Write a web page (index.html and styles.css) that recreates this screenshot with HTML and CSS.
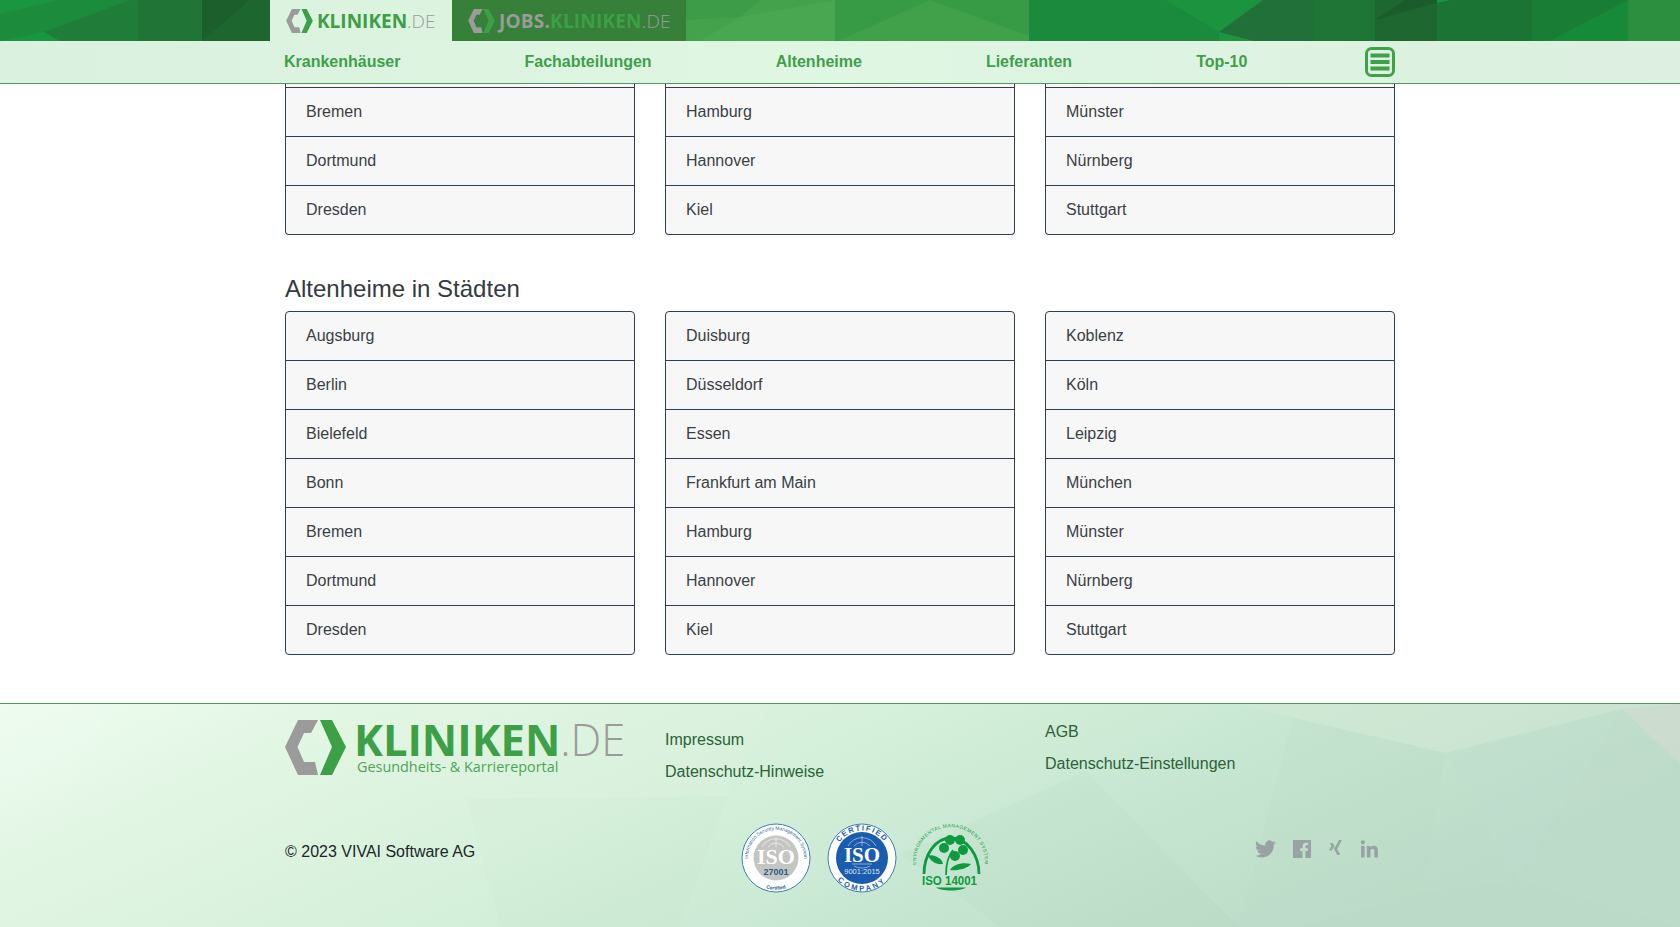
FILE: index.html
```html
<!DOCTYPE html>
<html lang="de">
<head>
	<meta charset="UTF-8">
	<title>Altenheime in Städten - Kliniken.de</title>
	<link rel="stylesheet" href="styles.css">
</head>
<body>
	<svg class="defs" width="0" height="0">
		<symbol id="logo-mark" viewBox="0 0 61 55">
			<polygon fill="#9b9b9b" points="13,0 33,0 26,13 19,13 12.500,27 19,42 30,42 33,55 13,55 0,27"/>
			<polygon fill="#3d9f46" points="35,0 47,0 61,27 47,55 35,55 47,27"/>
		</symbol>
	</svg>

	<header class="site-header">
		<div class="header-band">
			<svg class="poly-bg" viewBox="0 0 1680 41" preserveAspectRatio="none">
				<rect width="1680" height="41" fill="#1a9540"/>
				<polygon fill="#1c8b3c" points="0,41 44,32 130,0 60,0 0,14"/>
				<polygon fill="#1f7d39" points="44,32 130,0 140,0 140,41 60,41"/>
				<polygon fill="#207536" points="138,0 202,0 202,41 138,41"/>
				<polygon fill="#1e6630" points="202,0 270,0 270,41 202,41"/>
				<polygon fill="#1c5f2d" points="202,41 250,0 202,0"/>
				<polygon fill="#44a24c" points="686,0 840,0 840,41 686,41"/>
				<polygon fill="#3d9c47" points="686,0 760,0 740,17 686,20"/>
				<polygon fill="#49a651" points="740,17 835,0 835,41 700,41"/>
				<polygon fill="#379a44" points="835,0 1030,0 1030,41 835,41"/>
				<polygon fill="#41a14a" points="838,41 930,0 1043,41"/>
				<polygon fill="#1b8a3d" points="1029,0 1120,0 1120,41 1029,41"/>
				<polygon fill="#1a8a3d" points="1120,0 1219,0 1219,41 1120,41"/>
				<polygon fill="#1b933f" points="1165,0 1219,32 1263,0"/>
				<polygon fill="#21703a" points="1219,32 1263,0 1375,0 1375,41 1254,41"/>
				<polygon fill="#1f7535" points="1313,0 1375,0 1375,41 1313,41"/>
				<polygon fill="#1e6730" points="1375,0 1437,0 1437,41 1375,41"/>
				<polygon fill="#1b5c2c" points="1375,20 1405,0 1437,0 1437,3"/>
				<polygon fill="#1b7434" points="1437,3 1450,0 1532,0 1532,41 1437,41"/>
				<polygon fill="#1a7d36" points="1532,0 1628,0 1628,41 1532,41"/>
				<polygon fill="#178a3a" points="1550,41 1628,0 1628,41"/>
				<polygon fill="#2c8f3f" points="1628,0 1680,0 1680,41 1628,41"/>
			</svg>
			<div class="header-tabs">
				<a class="tab tab-active">
					<svg class="tab-mark"><use href="#logo-mark"/></svg>
					<span class="brand"><b>KLINIKEN</b><i>.DE</i></span>
				</a>
				<a class="tab tab-jobs">
					<svg class="tab-mark"><use href="#logo-mark"/></svg>
					<span class="brand brand-jobs"><b class="brand-gray">JOBS.</b><b>KLINIKEN</b><i>.DE</i></span>
				</a>
			</div>
		</div>
		<nav class="main-nav">
			<div class="main-nav-inner">
				<a>Krankenhäuser</a>
				<a>Fachabteilungen</a>
				<a>Altenheime</a>
				<a>Lieferanten</a>
				<a>Top-10</a>
				<svg class="menu-icon" viewBox="0 0 30 30">
					<rect x="1.500" y="1.500" width="27" height="27" rx="5" fill="none" stroke="#3fa24a" stroke-width="3"/>
					<rect x="5.500" y="6.500" width="19" height="4" fill="#3fa24a"/>
					<rect x="5.500" y="13" width="19" height="4" fill="#3fa24a"/>
					<rect x="5.500" y="19.500" width="19" height="4" fill="#3fa24a"/>
				</svg>
			</div>
		</nav>
	</header>

	<main class="content">
		<div class="city-grid">
			<ul class="city-list city-list-cut">
				<li></li>
				<li>Bremen</li>
				<li>Dortmund</li>
				<li>Dresden</li>
			</ul>
			<ul class="city-list city-list-cut">
				<li></li>
				<li>Hamburg</li>
				<li>Hannover</li>
				<li>Kiel</li>
			</ul>
			<ul class="city-list city-list-cut">
				<li></li>
				<li>Münster</li>
				<li>Nürnberg</li>
				<li>Stuttgart</li>
			</ul>
		</div>

		<h3 class="section-title">Altenheime in Städten</h3>
		<div class="city-grid">
			<ul class="city-list">
				<li>Augsburg</li>
				<li>Berlin</li>
				<li>Bielefeld</li>
				<li>Bonn</li>
				<li>Bremen</li>
				<li>Dortmund</li>
				<li>Dresden</li>
			</ul>
			<ul class="city-list">
				<li>Duisburg</li>
				<li>Düsseldorf</li>
				<li>Essen</li>
				<li>Frankfurt am Main</li>
				<li>Hamburg</li>
				<li>Hannover</li>
				<li>Kiel</li>
			</ul>
			<ul class="city-list">
				<li>Koblenz</li>
				<li>Köln</li>
				<li>Leipzig</li>
				<li>München</li>
				<li>Münster</li>
				<li>Nürnberg</li>
				<li>Stuttgart</li>
			</ul>
		</div>
	</main>

	<footer class="site-footer">
		<svg class="poly-bg" viewBox="0 0 1680 223" preserveAspectRatio="none">
			<defs>
				<linearGradient id="footer-fade" x1="0" y1="0" x2="1" y2=".3">
					<stop offset="0" stop-color="#edfcef"/>
					<stop offset=".25" stop-color="#e0f5e2"/>
					<stop offset=".5" stop-color="#d5f0da"/>
					<stop offset=".75" stop-color="#c6e6d1"/>
					<stop offset="1" stop-color="#bcdcc9"/>
				</linearGradient>
			</defs>
			<rect width="1680" height="223" fill="url(#footer-fade)"/>
			<polygon fill="#ffffff" opacity=".07" points="0,0 112,0 64,94 0,90"/>
			<polygon fill="#ffffff" opacity=".03" points="112,0 289,0 257,20 64,94"/>
			<polygon fill="#ffffff" opacity=".03" points="257,20 466,95 509,0 289,0"/>
			<polygon fill="#ffffff" opacity=".05" points="509,0 771,0 728,92 466,95"/>
			<polygon fill="#000000" opacity=".008" points="466,95 728,92 680,223 500,223"/>
			<polygon fill="#000000" opacity=".012" points="1086,67 1239,223 1000,223 900,150"/>
			<polygon fill="#d6e8d8" opacity=".45" points="1293,14 1445,49 1622,5 1680,0 1240,0"/>
			<polygon fill="#d2dcd2" opacity=".7" points="1622,5 1680,0 1680,60"/>
			<polygon fill="#bcdcc9" opacity=".25" points="1293,14 1445,49 1424,189 1239,223"/>
			<polygon fill="#c4dccd" opacity=".35" points="1445,49 1622,5 1518,177"/>
			<polygon fill="#bfd9c9" opacity=".35" points="1622,5 1680,60 1680,217 1518,177"/>
			<polygon fill="#b9dac8" opacity=".4" points="1424,189 1518,177 1680,223 1300,223"/>
		</svg>

		<div class="footer-inner">
			<div class="footer-top">
				<div class="footer-logo">
					<svg class="footer-mark"><use href="#logo-mark"/></svg>
					<div class="footer-wordmark">
						<span class="brand brand-large"><b>KLINIKEN</b><i>.DE</i></span>
						<span class="brand-claim">Gesundheits- &amp; Karriereportal</span>
					</div>
				</div>
				<ul class="footer-links footer-links-low">
					<li>Impressum</li>
					<li>Datenschutz-Hinweise</li>
				</ul>
				<ul class="footer-links">
					<li>AGB</li>
					<li>Datenschutz-Einstellungen</li>
				</ul>
			</div>

			<div class="footer-bottom">
				<div class="copyright">© 2023 VIVAI Software AG</div>

				<div class="badges">
					<svg class="badge" viewBox="0 0 70 70">
						<defs>
							<path id="arc-top-1" d="M9.300 46 A28 28 0 1 1 60.700 46"/>
							<path id="arc-bot-1" d="M8 52 A32 32 0 0 0 62 52"/>
							<path id="arc-top-2" d="M7.500 35 A27.500 27.500 0 0 1 62.500 35"/>
							<path id="arc-bot-2" d="M2 35 A33 33 0 0 0 68 35"/>
						</defs>
						<circle cx="35" cy="35" r="34" fill="#fff" stroke="#3f7dbd" stroke-width="1"/>
						<circle cx="35" cy="35" r="22.500" fill="#c5c5c1"/>
						<path d="M21 24 A16 16 0 0 1 49 24 M27 24 A12 15 0 0 1 43 24 M35 14 V24" fill="none" stroke="#fff" stroke-width=".7" opacity=".8"/>
						<text class="badge-iso" x="35" y="41" font-size="22" fill="#fff" text-anchor="middle">ISO</text>
						<text class="badge-sans" x="35" y="52" font-size="9" fill="#2a5a8f" text-anchor="middle">27001</text>
						<text class="badge-plain" font-size="4.800" fill="#27639f"><textPath href="#arc-top-1" startOffset="50%" text-anchor="middle">Information Security Management System</textPath></text>
						<text class="badge-sans" font-size="5" fill="#27639f"><textPath href="#arc-bot-1" startOffset="50%" text-anchor="middle">Certified</textPath></text>
					</svg>

					<svg class="badge" viewBox="0 0 70 70">
						<circle cx="35" cy="35" r="34" fill="#fff" stroke="#3f7dbd" stroke-width="1"/>
						<circle cx="35" cy="35" r="26" fill="#1a5cae"/>
						<path d="M21 23 A16 16 0 0 1 49 23 M27 23 A12 15 0 0 1 43 23 M35 13 V23 M25 41 H45 M27 43 A12 8 0 0 0 43 43" fill="none" stroke="#fff" stroke-width=".7" opacity=".7"/>
						<text class="badge-iso" x="35" y="39" font-size="21" fill="#fff" text-anchor="middle">ISO</text>
						<text class="badge-plain" x="35" y="51" font-size="7.500" fill="#dfe8f4" text-anchor="middle">9001:2015</text>
						<text class="badge-sans" font-size="7.500" letter-spacing="1.500" fill="#1a5cae"><textPath href="#arc-top-2" startOffset="50%" text-anchor="middle">CERTIFIED</textPath></text>
						<text class="badge-sans" font-size="7.500" letter-spacing="2.500" fill="#1a5cae"><textPath href="#arc-bot-2" startOffset="50%" text-anchor="middle">COMPANY</textPath></text>
					</svg>

					<svg class="badge badge-env" viewBox="0 0 75 69">
						<defs>
							<path id="arc-env" d="M4 47 A34.500 34.500 0 1 1 71 47"/>
						</defs>
						<path d="M11 51 C11 32 22 15 38 15 C54 15 66 32 66 51" fill="none" stroke="#0e9a40" stroke-width="2.800"/>
						<circle cx="37" cy="17" r="5" fill="#0e9a40"/>
						<circle cx="47" cy="17" r="5" fill="#0e9a40"/>
						<circle cx="31" cy="25" r="5" fill="#0e9a40"/>
						<circle cx="50" cy="27" r="5" fill="#0e9a40"/>
						<circle cx="42" cy="33" r="5" fill="#0e9a40"/>
						<path d="M33 52 C33 42 35 33 40 27" fill="none" stroke="#0e9a40" stroke-width="1.800"/>
						<path d="M15 32 C22 32 29 35 30 41 C23 42 17 38 15 32Z" fill="#0e9a40"/>
						<path d="M37 47 C40 41 50 39 58 41 C54 46 44 48 37 47Z" fill="#0e9a40"/>
						<text class="badge-sans" x="9" y="62" font-size="13" fill="#0e9a40" textLength="55" lengthAdjust="spacingAndGlyphs">ISO 14001</text>
						<path d="M23 64.500 H53 C48 68.500 28 68.500 23 64.500Z" fill="#0e9a40"/>
						<text class="badge-plain" font-size="5" letter-spacing=".4" fill="#1aa24b"><textPath href="#arc-env" startOffset="50%" text-anchor="middle">ENVIRONMENTAL MANAGEMENT SYSTEM</textPath></text>
					</svg>
				</div>

				<div class="social">
					<svg class="social-twitter" viewBox="0 0 24 20"><path transform="translate(0 -2)" d="M23.953 4.570a10 10 0 01-2.825.775 4.958 4.958 0 002.163-2.723c-.951.555-2.005.959-3.127 1.184a4.920 4.920 0 00-8.384 4.482C7.690 8.095 4.067 6.130 1.640 3.162a4.822 4.822 0 00-.666 2.475c0 1.710.870 3.213 2.188 4.096a4.904 4.904 0 01-2.228-.616v.060a4.923 4.923 0 003.946 4.827 4.996 4.996 0 01-2.212.085 4.936 4.936 0 004.604 3.417 9.867 9.867 0 01-6.102 2.105c-.390 0-.779-.023-1.170-.067a13.995 13.995 0 007.557 2.209c9.053 0 13.998-7.496 13.998-13.985 0-.210 0-.420-.015-.630A9.935 9.935 0 0024 4.590z"/></svg>
					<svg class="social-facebook" viewBox="0 0 24 24"><path d="M24 0H0v24h12.818v-9.294H9.689v-3.621h3.129V8.410c0-3.099 1.894-4.785 4.659-4.785 1.325 0 2.464.097 2.796.141v3.240h-1.921c-1.500 0-1.792.721-1.792 1.771v2.311h3.584l-.465 3.630H16.560V24H24z"/></svg>
					<svg class="social-xing" viewBox="0 0 24 24"><path d="M18.188 0c-.517 0-.741.325-.927.660 0 0-7.455 13.224-7.702 13.657.015.024 4.919 9.023 4.919 9.023.170.308.436.660.967.660h3.454c.211 0 .375-.078.463-.220.089-.151.089-.346-.009-.536l-4.879-8.916c-.004-.006-.004-.016 0-.022L22.139.756c.095-.191.097-.387.006-.535C22.056.078 21.894 0 21.686 0h-3.498zM3.648 4.740c-.211 0-.385.074-.473.216-.090.149-.078.339.020.531l2.340 4.050c.004.010.004.016 0 .021L1.860 16.051c-.099.188-.093.381 0 .529.085.142.239.234.450.234h3.461c.518 0 .766-.348.945-.667l3.734-6.609-2.378-4.155c-.172-.315-.434-.659-.962-.659H3.648v.016z"/></svg>
					<svg class="social-linkedin" viewBox="3 3 18 18"><path d="M20.447 20.452h-3.554v-5.569c0-1.328-.027-3.037-1.852-3.037-1.853 0-2.136 1.445-2.136 2.939v5.667H9.351V9h3.414v1.561h.046c.477-.900 1.637-1.850 3.370-1.850 3.601 0 4.267 2.370 4.267 5.455v6.286zM5.337 7.433c-1.144 0-2.063-.926-2.063-2.065 0-1.138.920-2.063 2.063-2.063 1.140 0 2.064.925 2.064 2.063 0 1.139-.925 2.065-2.064 2.065zm1.782 13.019H3.555V9h3.564v11.452z"/></svg>
				</div>
			</div>
		</div>
	</footer>
</body>
</html>
```

FILE: styles.css
```css
* {
	box-sizing: border-box;
}

body {
	margin: 0;
	height: 927px;
	overflow: hidden;
	background-color: #fff;
	font-family: "Liberation Sans", Arial, sans-serif;
	font-size: 16px;
	line-height: 24px;
	color: #212529;
}

.defs {
	display: block;
}

.poly-bg {
	position: absolute;
	top: 0;
	left: 0;
	width: 100%;
	height: 100%;
}

/* header */

.header-band {
	position: relative;
	height: 41px;
}

.header-tabs {
	position: relative;
	display: flex;
	width: 1110px;
	height: 41px;
	margin: 0 auto;
}

.tab {
	display: flex;
	align-items: center;
	height: 41px;
	padding-left: 16px;
}

.tab-active {
	width: 182px;
	margin-left: -15px;
	background-color: #dcf3e0;
}

.tab-jobs {
	width: 234px;
	background-color: #368039;
}

.tab-mark {
	flex: none;
	width: 27px;
	height: 24px;
	margin-right: 4px;
}

.brand {
	font-family: "Open Sans", "Liberation Sans", sans-serif;
	font-size: 19px;
	line-height: 24px;
	white-space: nowrap;
}

.brand b {
	font-weight: 700;
	color: #3d9f46;
}

.brand i {
	font-style: normal;
	font-weight: 300;
	color: #9b9b9b;
}

.brand b.brand-gray {
	color: #9b9b9b;
}

.brand-jobs {
	letter-spacing: .2px;
}

.main-nav {
	height: 43px;
	background: linear-gradient(90deg, #dbf1df, #dff6e3 50%, #dcefe0);
	border-bottom: 1px solid #4f9a57;
}

.main-nav-inner {
	display: flex;
	align-items: center;
	gap: 124px;
	width: 1110px;
	height: 42px;
	margin: 0 auto;
}

.main-nav a {
	font-weight: 700;
	color: #3f9f4b;
	white-space: nowrap;
}

.main-nav-inner a:first-child {
	margin-left: -1px;
}

.menu-icon {
	flex: none;
	width: 30px;
	height: 30px;
	margin-left: -6px;
}

/* lists */

.content {
	width: 1110px;
	margin: 0 auto;
}

.city-grid {
	display: grid;
	grid-template-columns: repeat(3, 350px);
	gap: 30px;
}

.city-list {
	margin: 0;
	padding: 0;
	list-style: none;
	background-color: #f7f7f7;
	border: 1px solid #2f3d56;
	border-radius: 4px;
	color: #3a3f45;
}

.city-list li {
	height: 49px;
	padding: 12px 20px;
	border-top: 1px solid #2f3d56;
}

.city-list li:first-child {
	height: 48px;
	border-top: 0;
}

/* the list above the heading runs on under the header */
.city-list-cut {
	border-top: 0;
	border-radius: 0 0 4px 4px;
}

.city-list-cut li:first-child {
	height: 3px;
	padding: 0;
}

.section-title {
	margin: 39px 0 8px;
	font-size: 24px;
	font-weight: 400;
	line-height: 29px;
	color: #343a40;
}

/* footer */

.site-footer {
	position: relative;
	height: 224px;
	margin-top: 48px;
	border-top: 1px solid #4f9a57;
}

.footer-inner {
	position: relative;
	width: 1110px;
	margin: 0 auto;
}

.footer-top {
	display: grid;
	grid-template-columns: repeat(3, 350px);
	gap: 30px;
	height: 119px;
	padding-top: 16px;
}

.footer-logo {
	display: flex;
}

.footer-mark {
	flex: none;
	width: 61px;
	height: 55px;
	margin-right: 8px;
}

.footer-wordmark {
	display: flex;
	flex-direction: column;
}

.brand-large {
	height: 39px;
	font-size: 43.500px;
	line-height: 39px;
}

.brand-claim {
	margin-left: 3px;
	font-family: "Open Sans", "Liberation Sans", sans-serif;
	font-size: 14.400px;
	line-height: 16px;
	color: #4ba655;
}

.footer-links {
	margin: 0;
	padding: 0;
	list-style: none;
	color: #2b6238;
}

.footer-links li {
	margin-bottom: 8px;
}

.footer-links-low {
	margin-top: 8px;
}

.footer-bottom {
	display: grid;
	grid-template-columns: repeat(3, 350px);
	gap: 30px;
}

.copyright {
	margin-top: 17px;
}

.badges {
	display: flex;
	gap: 16px;
	margin-left: 76px;
}

.badge {
	width: 70px;
	height: 70px;
}

.badge-env {
	width: 75px;
	height: 69px;
}

.badge-iso {
	font-family: "Liberation Serif", serif;
	font-weight: 700;
}

.badge-sans {
	font-family: "Liberation Sans", sans-serif;
	font-weight: 700;
}

.badge-plain {
	font-family: "Liberation Sans", sans-serif;
}

.social {
	display: flex;
	justify-content: flex-end;
	align-items: flex-start;
	gap: 17px;
	margin-top: 17px;
	padding-right: 16px;
}

.social svg {
	fill: #99a3a6;
}

.social-twitter {
	width: 21px;
	height: 18px;
}

.social-facebook {
	width: 18px;
	height: 18px;
}

.social-xing {
	width: 15px;
	height: 15px;
}

.social-linkedin {
	width: 19px;
	height: 18px;
}
```
